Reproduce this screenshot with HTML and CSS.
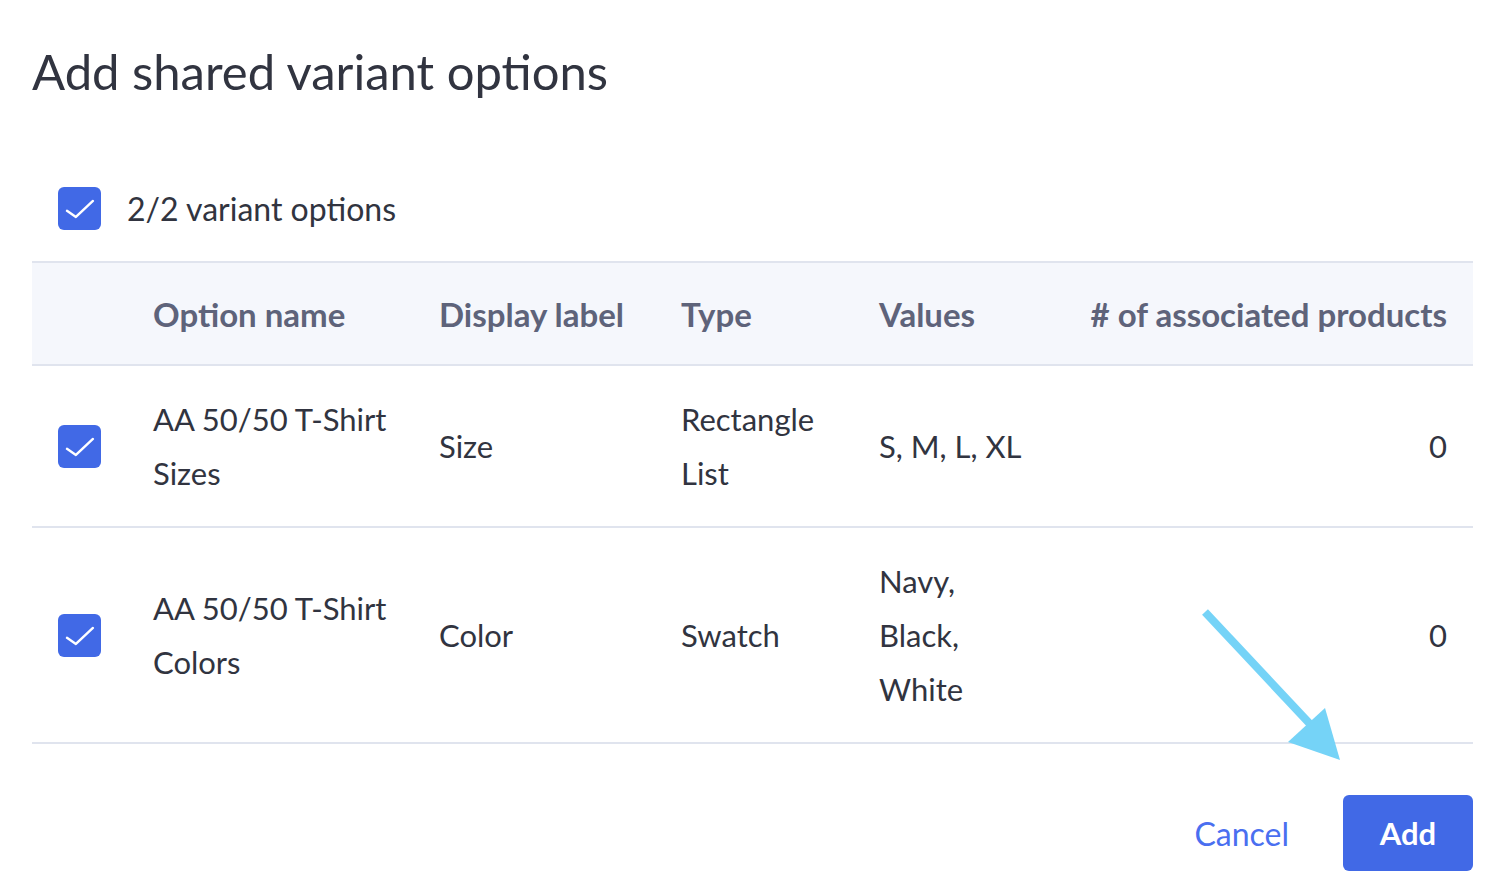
FILE: index.html
```html
<!DOCTYPE html>
<html lang="en">
<head>
  <meta charset="UTF-8">
  <meta name="viewport" content="width=device-width, initial-scale=1.0">
  <title>Add shared variant options</title>
  <link rel="stylesheet" href="styles.css">
</head>
<body>
  <div class="dialog">
    <h1 class="title">Add shared variant options</h1>

    <div class="select-all">
      <span class="check"><svg viewBox="0 0 24 24"><path d="M5 13.3l5 3.4 9.5-8.9"/></svg></span>
      <span class="select-label">2/2 variant options</span>
    </div>

    <table class="options">
      <colgroup>
        <col class="c-check">
        <col class="c-name">
        <col class="c-label">
        <col class="c-type">
        <col class="c-values">
        <col>
      </colgroup>
      <thead>
        <tr>
          <th></th>
          <th>Option name</th>
          <th>Display label</th>
          <th>Type</th>
          <th>Values</th>
          <th class="num"># of associated products</th>
        </tr>
      </thead>
      <tbody>
        <tr>
          <td><span class="check"><svg viewBox="0 0 24 24"><path d="M5 13.3l5 3.4 9.5-8.9"/></svg></span></td>
          <td>AA 50/50 T-Shirt Sizes</td>
          <td>Size</td>
          <td>Rectangle List</td>
          <td>S, M, L, XL</td>
          <td class="num">0</td>
        </tr>
        <tr>
          <td><span class="check"><svg viewBox="0 0 24 24"><path d="M5 13.3l5 3.4 9.5-8.9"/></svg></span></td>
          <td>AA 50/50 T-Shirt Colors</td>
          <td>Color</td>
          <td>Swatch</td>
          <td>Navy, Black, White</td>
          <td class="num">0</td>
        </tr>
      </tbody>
    </table>

    <div class="actions">
      <button class="btn-link">Cancel</button>
      <button class="btn-primary">Add</button>
    </div>

    <!-- annotation arrow pointing at the Add button -->
    <svg class="pointer" viewBox="0 0 160 170">
      <path d="M7 6 L112 118" class="shaft"/>
      <polygon points="90,136 127,102 142,154" class="head"/>
    </svg>
  </div>
</body>
</html>
```

FILE: styles.css
```css
body {
  margin: 0;
  font-family: Lato, "Open Sans", sans-serif;
  color: #313440;
  background: #fff;
}

.dialog {
  position: relative;
  padding: 0 39px 0 32px;
}

.title {
  margin: 0;
  padding-top: 39px;
  font-size: 49px;
  font-weight: 400;
  line-height: 64px;
  color: #313440;
}

.select-all {
  display: flex;
  align-items: center;
  gap: 26px;
  padding: 84px 0 31px 26px;
}

.select-label {
  font-size: 32px;
}

.check {
  display: inline-flex;
  width: 43px;
  height: 43px;
  border-radius: 6px;
  background: #4169e6;
  vertical-align: middle;
}

.options td .check {
  display: flex;
}

.check svg {
  width: 43px;
  height: 43px;
}

.check path {
  fill: none;
  stroke: #fff;
  stroke-width: 1.35;
  stroke-linecap: round;
  stroke-linejoin: round;
}

.options {
  width: 100%;
  border-collapse: collapse;
  table-layout: fixed;
  font-size: 31px;
}

.c-check { width: 95px; }
.c-name { width: 286px; }
.c-label { width: 242px; }
.c-type { width: 198px; }
.c-values { width: 210px; }

.options th {
  background: #f5f7fc;
  border-top: 2px solid #e0e4ee;
  border-bottom: 2px solid #e0e4ee;
  height: 101px;
  padding: 0 26px;
  text-align: left;
  font-size: 33px;
  font-weight: 700;
  color: #5e637a;
}

.options td {
  padding: 26px 26px;
  line-height: 54px;
  border-bottom: 2px solid #e0e4ee;
  vertical-align: middle;
}

.options .num {
  text-align: right;
}

.actions {
  display: flex;
  justify-content: flex-end;
  align-items: center;
  gap: 54px;
  padding-top: 51px;
}

.btn-link {
  border: 0;
  background: none;
  padding: 0;
  font-family: inherit;
  font-size: 32px;
  color: #4a6ff0;
  cursor: pointer;
}

.btn-primary {
  width: 130px;
  height: 76px;
  border: 0;
  border-radius: 6px;
  background: #4169e6;
  color: #fff;
  font-family: inherit;
  font-size: 31px;
  font-weight: 700;
  cursor: pointer;
}

.pointer {
  position: absolute;
  left: 1198px;
  top: 606px;
  width: 160px;
  height: 170px;
}

.pointer .shaft {
  stroke: #75d3f7;
  stroke-width: 8;
}

.pointer .head {
  fill: #75d3f7;
}
```
